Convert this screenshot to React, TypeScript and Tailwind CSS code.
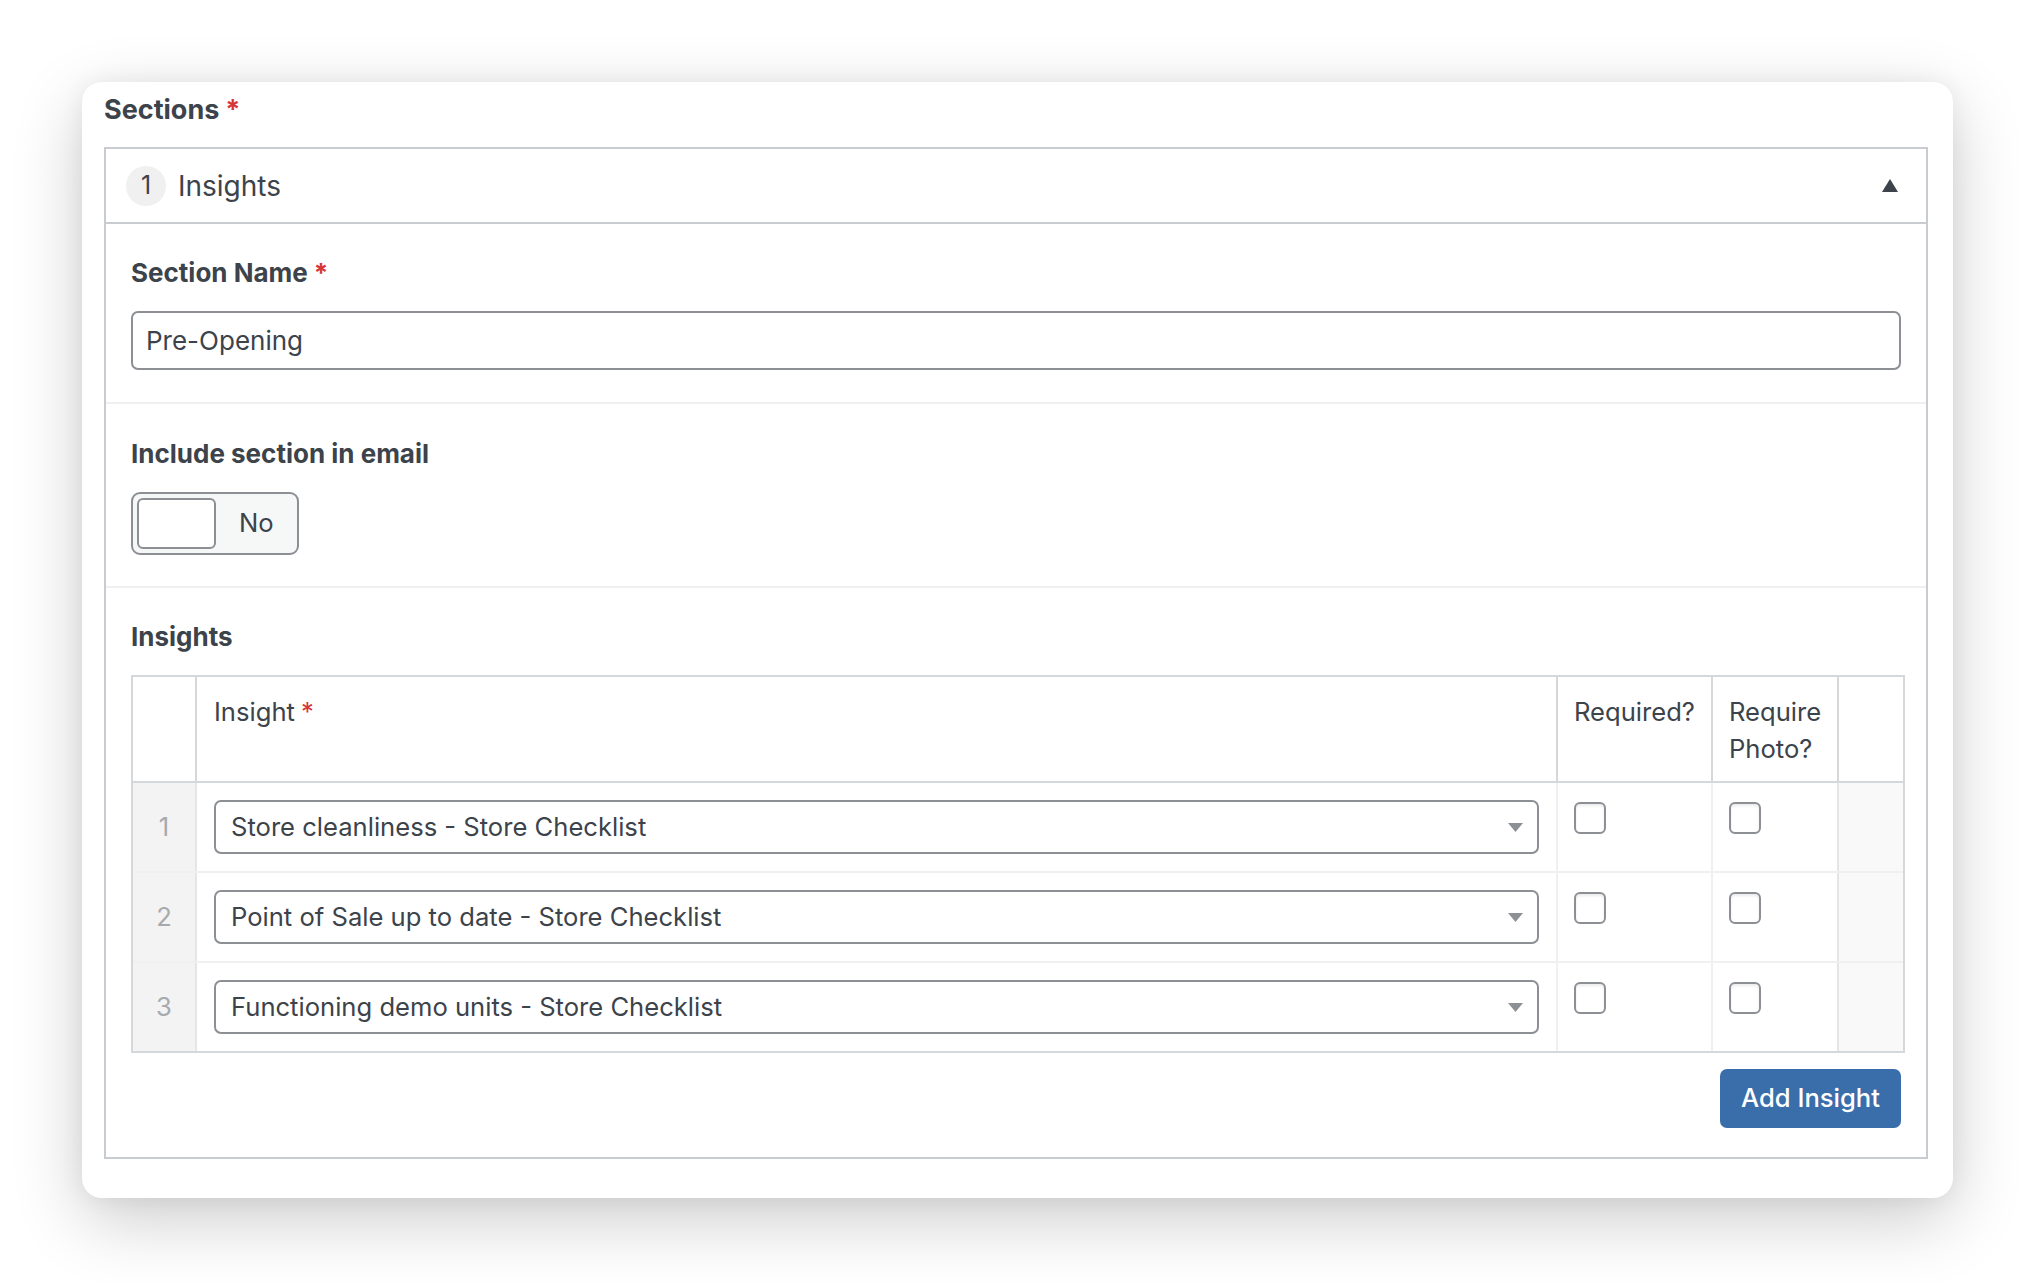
import React from "react";

const rows = [
  "Store cleanliness - Store Checklist",
  "Point of Sale up to date - Store Checklist",
  "Functioning demo units - Store Checklist",
];

const Star = () => <span className="text-[#d63638] ml-[6px]">*</span>;

const Checkbox = () => (
  <div className="w-[32px] h-[32px] rounded-[6px] border-2 border-[#8c8f94] bg-white shadow-[inset_0_2px_3px_rgba(0,0,0,0.08)]"></div>
);

const App = () => {
  return (
    <div
      className="w-[2035px] h-[1282px] bg-white px-[82px] pt-[82px] text-[#3c434a]"
      style={{ fontFamily: "Inter, 'Noto Sans', sans-serif" }}
    >
      <div className="bg-white rounded-[20px] shadow-[0_22px_70px_rgba(0,0,0,0.2),0_0_24px_rgba(0,0,0,0.06)] pl-[22px] pr-[25px] pt-[11px] pb-[39px]">
        <h2 className="text-[27px] leading-[33px] font-bold">
          Sections
          <Star />
        </h2>

        <div className="mt-[21px] border-2 border-[#c8ccd0]">
          {/* header */}
          <div className="h-[75px] flex items-center pl-[20px] pr-[28px] border-b-2 border-[#c8ccd0]">
            <div className="w-[40px] h-[40px] rounded-full bg-[#f0f0f1] flex items-center justify-center text-[25px]">
              1
            </div>
            <span className="ml-[12px] text-[28px]">Insights</span>
            <svg className="ml-auto" width="16" height="13" viewBox="0 0 16 13">
              <path d="M8 0 L16 13 L0 13 Z" fill="#3c434a" />
            </svg>
          </div>

          <div className="px-[25px] text-[25.6px]">
            {/* section name */}
            <div className="pt-[33px] pb-[32px] border-b-2 border-[#f0f0f1] -mx-[25px] px-[25px]">
              <label className="block text-[26px] leading-[32px] font-bold">
                Section Name
                <Star />
              </label>
              <div className="mt-[22px] h-[59px] rounded-[7px] border-2 border-[#8c8f94] flex items-center px-[13px] text-[26px]">
                Pre-Opening
              </div>
            </div>

            {/* include in email */}
            <div className="pt-[34px] pb-[31px] border-b-2 border-[#f0f0f1] -mx-[25px] px-[25px]">
              <label className="block text-[26px] leading-[32px] font-bold">
                Include section in email
              </label>
              <div className="mt-[22px] w-[168px] h-[63px] rounded-[9px] border-2 border-[#8c8f94] bg-[#f6f7f7] flex items-center pl-[4px]">
                <div className="w-[79px] h-[51px] rounded-[6px] border-2 border-[#8c8f94] bg-white"></div>
                <span className="ml-[23px]">No</span>
              </div>
            </div>

            {/* insights table */}
            <div className="pt-[33px] pb-[29px]">
              <label className="block text-[26px] leading-[32px] font-bold">Insights</label>
              <div className="mt-[22px] mr-[-4px] border-2 border-[#d5d8db]">
                <div className="flex border-b-2 border-[#d5d8db] leading-[37px]">
                  <div className="w-[64px] shrink-0 border-r-2 border-[#d5d8db]"></div>
                  <div className="flex-1 px-[17px] pt-[16px] pb-[14px] border-r-2 border-[#d5d8db]">
                    Insight
                    <Star />
                  </div>
                  <div className="w-[155px] shrink-0 px-[16px] pt-[16px] pb-[14px] border-r-2 border-[#d5d8db]">
                    Required?
                  </div>
                  <div className="w-[126px] shrink-0 px-[16px] pt-[16px] pb-[14px] border-r-2 border-[#d5d8db]">
                    Require
                    <br />
                    Photo?
                  </div>
                  <div className="w-[64px] shrink-0"></div>
                </div>
                {rows.map((r, i) => (
                  <div
                    key={r}
                    className={`flex ${i > 0 ? "h-[90px] border-t-2 border-[#f0f0f1]" : "h-[88px]"}`}
                  >
                    <div className="w-[64px] shrink-0 bg-[#f3f3f4] border-r-2 border-[#e4e5e7] flex items-center justify-center text-[#a7aaad]">
                      {i + 1}
                    </div>
                    <div className="flex-1 px-[17px] flex items-center border-r-2 border-[#f0f0f1]">
                      <div className="w-full h-[54px] rounded-[7px] border-2 border-[#8c8f94] flex items-center pl-[15px] pr-[14px]">
                        <span className="flex-1">{r}</span>
                        <svg width="15" height="9" viewBox="0 0 15 9">
                          <path d="M0 0 L15 0 L7.5 9 Z" fill="#8c8f94" />
                        </svg>
                      </div>
                    </div>
                    <div className="w-[155px] shrink-0 px-[16px] pt-[19px] border-r-2 border-[#f0f0f1]">
                      <Checkbox />
                    </div>
                    <div className="w-[126px] shrink-0 px-[16px] pt-[19px] border-r-2 border-[#e4e5e7]">
                      <Checkbox />
                    </div>
                    <div className="w-[64px] shrink-0 bg-[#f9f9f9]"></div>
                  </div>
                ))}
              </div>
              <div className="flex justify-end mt-[16px]">
                <button className="h-[59px] w-[181px] rounded-[7px] bg-[#3a6eab] text-white text-[25.6px] font-medium">
                  Add Insight
                </button>
              </div>
            </div>
          </div>
        </div>
      </div>
    </div>
  );
};

export default App;
